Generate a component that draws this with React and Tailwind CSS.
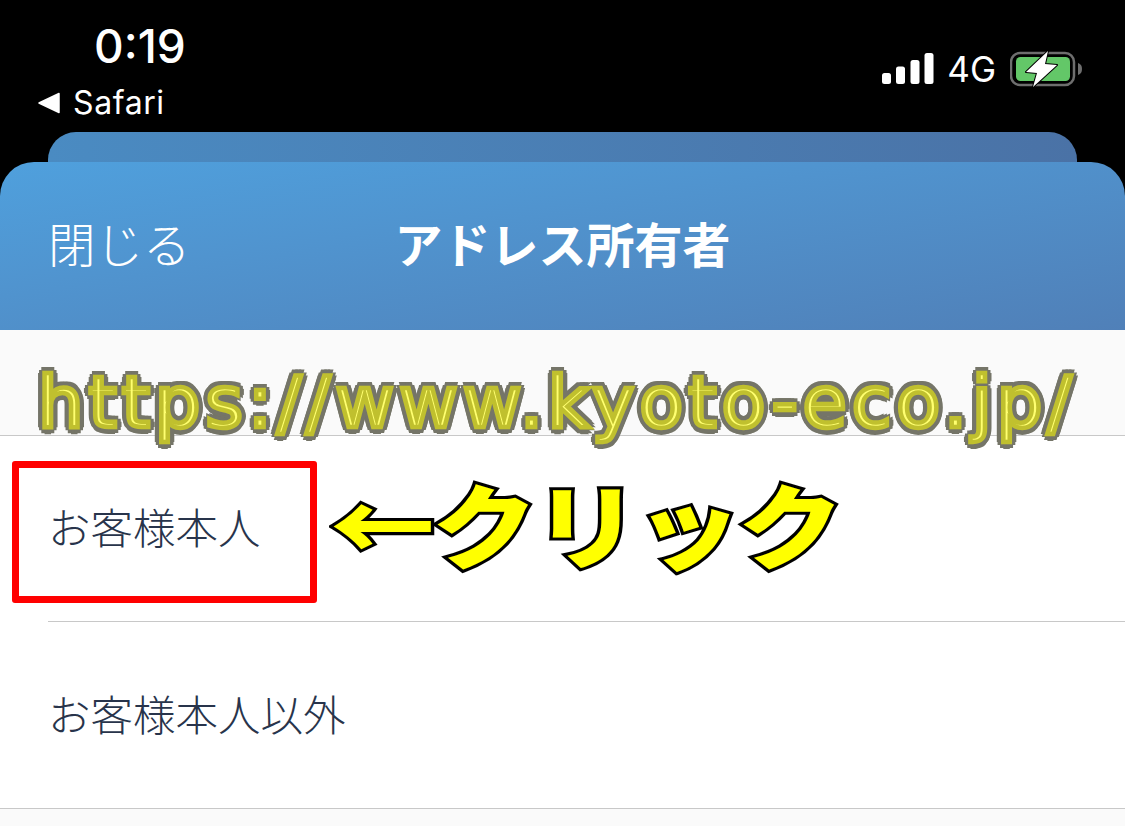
export default function App() {
  const cjk = "font-['Inter','Noto_Sans_CJK_JP',sans-serif]";
  return (
    <div className={`w-[1125px] h-[826px] overflow-hidden bg-black flex flex-col ${cjk}`}>
      {/* status bar */}
      <div className="h-[132px] shrink-0 flex justify-between text-white">
        <div className="flex flex-col pl-[38px] pt-[21px]">
          <div className="pl-[56px] text-[46px] leading-[50px] font-medium">0:19</div>
          <div className="flex items-center gap-[13px] mt-[13px]">
            <svg width="22" height="22" viewBox="0 0 22 22">
              <path d="M21 1.5 V20.5 L1 11 Z" fill="#fff" stroke="#fff" strokeWidth="1.5" strokeLinejoin="round" />
            </svg>
            <span className="text-[32px] leading-[38px] tracking-[0.6px]">Safari</span>
          </div>
        </div>
        <div className="flex items-start pt-[51px] pr-[42px] gap-[14px]">
          <svg width="52" height="34" viewBox="0 0 52 34" className="mr-[-1px]">
            <rect x="0" y="22" width="9" height="11" rx="2.5" fill="#fff" />
            <rect x="14" y="15.5" width="9" height="17.5" rx="2.5" fill="#fff" />
            <rect x="28.5" y="9" width="9" height="24" rx="2.5" fill="#fff" />
            <rect x="42.5" y="2" width="9" height="31" rx="2.5" fill="#fff" />
          </svg>
          <span className="text-[35px] leading-[36px]">4G</span>
          <svg width="73" height="36" viewBox="0 0 73 36">
            <rect x="1" y="2" width="63" height="32" rx="9" fill="none" stroke="#6e6e6e" strokeWidth="2.5" />
            <rect x="6" y="6" width="54" height="24" rx="4.5" fill="#63c768" />
            <path d="M68 12 C71 13 72 15 72 18 C72 21 71 23 68 24 Z" fill="#6e6e6e" />
            <path d="M38 0 L16 21 L27 22 L23 36 L47 14 L35 13 Z" fill="#fff" stroke="#000" strokeWidth="2" strokeLinejoin="round" paintOrder="stroke" />
          </svg>
        </div>
      </div>

      {/* card behind */}
      <div className="h-[30px] shrink-0 mx-[48px] rounded-t-[28px] bg-gradient-to-r from-[#4a8bc2] to-[#4a72a6]" />

      {/* sheet header */}
      <header className="h-[168px] shrink-0 rounded-t-[34px] bg-gradient-to-br from-[#4fa0dd] to-[#5080b8] grid grid-cols-3 items-center text-white">
        <div className="pl-[48px] text-[47.5px] font-light leading-none">閉じる</div>
        <div className="text-center text-[48px] font-bold leading-none whitespace-nowrap">アドレス所有者</div>
        <div />
      </header>

      {/* section heading with URL annotation */}
      <div className="h-[105px] shrink-0 bg-[#fafafa] pl-[38px] pt-[32px]">
        <span
          className="relative block w-max font-['DejaVu_Sans',sans-serif] font-normal text-[72px] leading-[80px] whitespace-nowrap text-[#c0c02e] tracking-[4.9px] [text-shadow:6.5px_0_0.5px_#757568,5.6px_3.25px_0.5px_#757568,3.25px_5.6px_0.5px_#757568,0_6.5px_0.5px_#757568,-3.25px_5.6px_0.5px_#757568,-5.6px_3.25px_0.5px_#757568,-6.5px_0_0.5px_#757568,-5.6px_-3.25px_0.5px_#757568,-3.25px_-5.6px_0.5px_#757568,0_-6.5px_0.5px_#757568,3.25px_-5.6px_0.5px_#757568,5.6px_-3.25px_0.5px_#757568] after:absolute after:left-0 after:top-0 after:text-[#ffff70] after:content-['https://www.kyoto-eco.jp/'] after:[text-shadow:none] after:[-webkit-text-stroke:4.5px_#c0c02e] after:[paint-order:fill_stroke]"
        >
          https://www.kyoto-eco.jp/
        </span>
      </div>

      {/* list */}
      <div className="shrink-0 bg-white border-t border-[#c8c8c8] text-[#28344b] text-[42.5px] font-light">
        <div className="relative h-[185px] flex items-center pl-[48px] pt-[2px]">
          <span className="leading-none">お客様本人</span>
          <div className="absolute left-[12px] top-[25px] w-[305px] h-[142px] border-[7px] border-[#ff0000] rounded-[3px]" />
          <span className="absolute left-[330px] top-[34px] origin-top-left scale-y-[0.88] font-['Noto_Sans_CJK_JP',sans-serif] font-black text-[105px] leading-[116px] tracking-[-3px] whitespace-nowrap text-[#ffff00] [-webkit-text-stroke:7px_#000] [paint-order:stroke_fill]">
            ←クリック
          </span>
        </div>
        <div className="ml-[48px] h-px bg-[#c8c8c8]" />
        <div className="h-[186px] flex items-center pl-[48px] pt-[2px]">
          <span className="leading-none">お客様本人以外</span>
        </div>
      </div>
      <div className="flex-1 bg-[#fafafa] border-t border-[#c8c8c8]" />
    </div>
  );
}
